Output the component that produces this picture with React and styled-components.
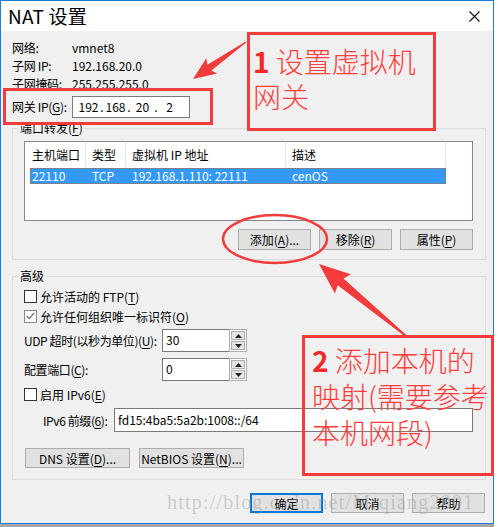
import React from 'react';
import styled, { createGlobalStyle } from 'styled-components';

const GlobalStyle = createGlobalStyle`
  html, body {
    margin: 0;
    padding: 0;
    background: #fff;
  }
  body {
    font-family: "Noto Sans CJK SC", "Noto Sans", sans-serif;
    font-size: 12px;
    color: #000;
  }
  u {
    text-underline-offset: 2px;
  }
`;

const Page = styled.div`
  position: relative;
  width: 498px;
  height: 527px;
  background: #fff;
  overflow: hidden;
`;

const Window = styled.div`
  width: 494px;
  height: 524px;
  box-sizing: border-box;
  border: 1px solid #1a7fd4;
  background: #f0f0f0;
  display: flex;
  flex-direction: column;
  box-shadow: 0 3px 0 #a6a6a6;
`;

const TitleBar = styled.div`
  height: 30px;
  flex: none;
  background: #fff;
  display: flex;
  align-items: center;
  justify-content: space-between;
  padding: 0 13px 0 7px;

  & .title {
    font-size: 19px;
    line-height: 30px;
    letter-spacing: 0.2px;
  }
`;

const Body = styled.div`
  flex: 1;
  display: flex;
  flex-direction: column;
  padding: 8px 7px 0 11px;
  white-space: nowrap;
`;

const InfoRow = styled.div`
  display: flex;
  align-items: center;
  height: ${(p) => p.$h || 18}px;
  line-height: 18px;
  margin-top: ${(p) => p.$mt || 0}px;

  & .label {
    width: 60px;
    flex: none;
    letter-spacing: -0.3px;
  }
`;

const IpInput = styled.div`
  width: 118px;
  height: 22px;
  box-sizing: border-box;
  border: 1px solid #7a7a7a;
  background: #fff;
  display: flex;
  align-items: center;
  padding-left: 5px;
`;

const IpOctet = styled.span`
  width: 21px;
  text-align: center;
`;

const IpDot = styled.span`
  width: 6px;
  text-align: center;
`;

const Group = styled.fieldset`
  margin: ${(p) => p.$mt}px 0 0 0;
  padding: ${(p) => p.$pad};
  border: 1px solid #dcdcdc;
  min-width: 0;
`;

const Legend = styled.legend`
  padding: 0 1px;
  margin-left: -5px;
  line-height: 16px;
  font-size: 12px;
`;

const ListBox = styled.div`
  height: 80px;
  box-sizing: border-box;
  border: 1px solid #828790;
  background: #fff;
`;

const ListHeader = styled.div`
  display: grid;
  grid-template-columns: 61px 40px 160px 160px 1fr;
  height: 25px;
  line-height: 25px;

  & > div {
    padding-left: 6px;
    border-right: 1px solid #e5e5e5;
  }
  & > div:first-child {
    padding-left: 7px;
  }
  & > div:last-child {
    border-right: none;
  }
`;

const ListRow = styled.div`
  display: grid;
  grid-template-columns: 56px 40px 160px 160px;
  width: 416px;
  height: 16px;
  line-height: 16px;
  margin: 1px 0 0 5px;
  background: #3399ff;
  color: #fff;
  outline: 1px dotted #c06a1a;
  outline-offset: -1px;

  & > div {
    padding-left: 6px;
  }
  & > div:first-child {
    padding-left: 2px;
  }
`;

const ButtonRow = styled.div`
  display: flex;
  justify-content: ${(p) => p.$justify || 'flex-end'};
  gap: ${(p) => p.$gap || 8}px;
  margin-top: ${(p) => p.$mt || 0}px;
  padding-left: ${(p) => p.$pl || 0}px;
  padding-right: ${(p) => p.$pr || 0}px;
`;

const Button = styled.div`
  width: ${(p) => p.$w || 73}px;
  height: ${(p) => p.$h || 20}px;
  box-sizing: border-box;
  border: ${(p) => (p.$default ? '2px solid #0078d7' : '1px solid #adadad')};
  background: #e1e1e1;
  display: flex;
  align-items: center;
  justify-content: center;
  font-size: 12px;
`;

const CheckRow = styled.div`
  display: flex;
  align-items: center;
  gap: 3px;
  height: 20px;
  margin-top: ${(p) => p.$mt || 0}px;
`;

const Box = styled.div`
  width: 13px;
  height: 13px;
  box-sizing: border-box;
  border: 1px solid ${(p) => (p.$checked ? '#8a8a8a' : '#333')};
  background: #fff;
  display: flex;
  align-items: center;
  justify-content: center;
`;

const FieldRow = styled.div`
  display: flex;
  align-items: center;
  margin-top: ${(p) => p.$mt || 0}px;
  padding-left: ${(p) => p.$pl || 0}px;

  & .label {
    width: ${(p) => p.$labelW}px;
    flex: none;
    letter-spacing: -0.4px;
  }
`;

const Spin = styled.div`
  display: flex;
  width: 85px;
  height: 23px;
`;

const SpinField = styled.div`
  flex: 1;
  box-sizing: border-box;
  border: 1px solid #7a7a7a;
  border-right: none;
  background: #fff;
  padding: 1px 0 0 3px;
  line-height: 17px;
`;

const SpinButtons = styled.div`
  width: 18px;
  box-sizing: border-box;
  border: 1px solid #adadad;
  background: #fff;
  padding: 1px;
  display: flex;
  flex-direction: column;
  gap: 1px;
`;

const SpinBtn = styled.div`
  flex: 1;
  box-sizing: border-box;
  border: 1px solid #adadad;
  background: #e5e5e5;
  display: flex;
  align-items: center;
  justify-content: center;
`;

const TextField = styled.div`
  width: ${(p) => p.$w}px;
  height: 24px;
  box-sizing: border-box;
  border: 1px solid #7a7a7a;
  background: #fff;
  padding: 2px 0 0 3px;
  line-height: 17px;
`;

const Overlay = styled.svg`
  position: absolute;
  inset: 0;
  pointer-events: none;
`;

const Note = styled.div`
  position: absolute;
  left: ${(p) => p.$x}px;
  top: ${(p) => p.$y}px;
  width: ${(p) => p.$w}px;
  height: ${(p) => p.$h}px;
  box-sizing: border-box;
  border: 3px solid #f23b3b;
  padding: ${(p) => p.$pad || 0};
  color: #ff3d3d;
  font-size: 28px;
  font-weight: 300;
  line-height: ${(p) => p.$lh || 35}px;
  white-space: nowrap;
  pointer-events: none;

  & b {
    font-weight: 700;
    color: #f02828;
  }
`;

const Watermark = styled.div`
  position: absolute;
  left: 167px;
  top: 491px;
  font-family: "Liberation Serif", serif;
  font-size: 20px;
  letter-spacing: 1.2px;
  color: rgba(150, 150, 150, 0.42);
  pointer-events: none;
  white-space: nowrap;
`;

const arrowPoints = (x1, y1, x2, y2, headLen, headW, tailW, neckW) => {
  const dx = x2 - x1;
  const dy = y2 - y1;
  const len = Math.hypot(dx, dy);
  const ux = dx / len;
  const uy = dy / len;
  const nx = -uy;
  const ny = ux;
  const bx = x2 - ux * headLen;
  const by = y2 - uy * headLen;
  const side = (x, y, w) => `${x + nx * w},${y + ny * w}`;
  return [
    side(x1, y1, tailW / 2),
    side(bx, by, neckW / 2),
    side(bx - ux * 3, by - uy * 3, headW / 2),
    `${x2},${y2}`,
    side(bx - ux * 3, by - uy * 3, -headW / 2),
    side(bx, by, -neckW / 2),
    side(x1, y1, -tailW / 2),
  ].join(' ');
};

const UpArrow = () => (
  <svg width="7" height="4" viewBox="0 0 7 4">
    <path d="M0 4 L3.5 0 L7 4 Z" fill="#222" />
  </svg>
);

const DownArrow = () => (
  <svg width="7" height="4" viewBox="0 0 7 4">
    <path d="M0 0 L3.5 4 L7 0 Z" fill="#222" />
  </svg>
);

const SpinInput = ({ value }) => (
  <Spin>
    <SpinField>{value}</SpinField>
    <SpinButtons>
      <SpinBtn>
        <UpArrow />
      </SpinBtn>
      <SpinBtn>
        <DownArrow />
      </SpinBtn>
    </SpinButtons>
  </Spin>
);

const Check = ({ checked, children, mt }) => (
  <CheckRow $mt={mt}>
    <Box $checked={checked}>
      {checked && (
        <svg width="9" height="8" viewBox="0 0 9 8">
          <path d="M0.8 4 L3.3 6.6 L8.3 0.8" stroke="#6e6e6e" strokeWidth="1.3" fill="none" />
        </svg>
      )}
    </Box>
    <span>{children}</span>
  </CheckRow>
);

const App = () => {
  return (
    <Page>
      <GlobalStyle />
      <Window>
        <TitleBar>
          <span className="title">NAT 设置</span>
          <svg width="11" height="11" viewBox="0 0 11 11">
            <path d="M0.5 0.5 L10.5 10.5 M10.5 0.5 L0.5 10.5" stroke="#111" strokeWidth="1.1" />
          </svg>
        </TitleBar>

        <Body>
          <InfoRow>
            <span className="label">网络:</span>
            <span>vmnet8</span>
          </InfoRow>
          <InfoRow>
            <span className="label">子网 IP:</span>
            <span>192.168.20.0</span>
          </InfoRow>
          <InfoRow>
            <span className="label">子网掩码:</span>
            <span>255.255.255.0</span>
          </InfoRow>

          <InfoRow $mt={3} $h={22}>
            <span className="label">
              网关 IP(<u>G</u>):
            </span>
            <IpInput>
              <IpOctet>192</IpOctet>
              <IpDot>.</IpDot>
              <IpOctet>168</IpOctet>
              <IpDot>.</IpDot>
              <IpOctet>20</IpOctet>
              <IpDot>.</IpDot>
              <IpOctet>2</IpOctet>
            </IpInput>
          </InfoRow>

          <Group $mt={2} $pad="5px 12px 9px 11px">
            <Legend>
              端口转发(<u>F</u>)
            </Legend>
            <ListBox>
              <ListHeader>
                <div>主机端口</div>
                <div>类型</div>
                <div>虚拟机 IP 地址</div>
                <div>描述</div>
                <div />
              </ListHeader>
              <ListRow>
                <div>22110</div>
                <div>TCP</div>
                <div>192.168.1.110: 22111</div>
                <div>cenOS</div>
              </ListRow>
            </ListBox>
            <ButtonRow $mt={8}>
              <Button $h={21}>
                添加(<u>A</u>)...
              </Button>
              <Button $h={21}>
                移除(<u>R</u>)
              </Button>
              <Button $h={21}>
                属性(<u>P</u>)
              </Button>
            </ButtonRow>
          </Group>

          <Group $mt={8} $pad="2px 12px 11px 11px">
            <Legend>高级</Legend>
            <Check>
              允许活动的 FTP(<u>T</u>)
            </Check>
            <Check checked>
              允许任何组织唯一标识符(<u>O</u>)
            </Check>
            <FieldRow $mt={3} $labelW={138}>
              <span className="label">
                UDP 超时(以秒为单位)(<u>U</u>):
              </span>
              <SpinInput value="30" />
            </FieldRow>
            <FieldRow $mt={6} $labelW={138}>
              <span className="label">
                配置端口(<u>C</u>):
              </span>
              <SpinInput value="0" />
            </FieldRow>
            <Check mt={3}>
              启用 IPv6(<u>E</u>)
            </Check>
            <FieldRow $mt={4} $pl={19} $labelW={71}>
              <span className="label">
                IPv6 前缀(<u>6</u>):
              </span>
              <TextField $w={359}>fd15:4ba5:5a2b:1008::/64</TextField>
            </FieldRow>
            <ButtonRow $mt={16} $justify="flex-start" $gap={9} $pl={1}>
              <Button $w={105}>
                DNS 设置(<u>D</u>)...
              </Button>
              <Button $w={105}>
                NetBIOS 设置(<u>N</u>)...
              </Button>
            </ButtonRow>
          </Group>

          <ButtonRow $mt={13} $pr={1}>
            <Button $w={73} $default>
              确定
            </Button>
            <Button $w={73}>取消</Button>
            <Button $w={73}>帮助</Button>
          </ButtonRow>
        </Body>
      </Window>

      <Watermark>http://blog.csdn.net/Mrqiang2001</Watermark>

      <Note $x={3} $y={88} $w={210} $h={37} />
      <Note $x={247} $y={32} $w={189} $h={99} $pad="9px 0 0 3px">
        <b>1</b> 设置虚拟机
        <br />
        网关
      </Note>
      <Note $x={302} $y={335} $w={192} $h={141} $pad="4px 0 0 7px" $lh={36}>
        <b>2</b> 添加本机的
        <br />
        映射(需要参考
        <br />
        本机网段)
      </Note>

      <Overlay width="498" height="527" viewBox="0 0 498 527">
        <polygon points={arrowPoints(246, 42, 193, 79, 20, 19, 1, 7)} fill="#f23b3b" />
        <polygon points={arrowPoints(406, 336, 319, 264, 28, 25, 2, 9)} fill="#f23b3b" />
        <ellipse cx="275" cy="239" rx="52" ry="24" fill="none" stroke="#f23b3b" strokeWidth="2.5" />
      </Overlay>
    </Page>
  );
};

export default App;
